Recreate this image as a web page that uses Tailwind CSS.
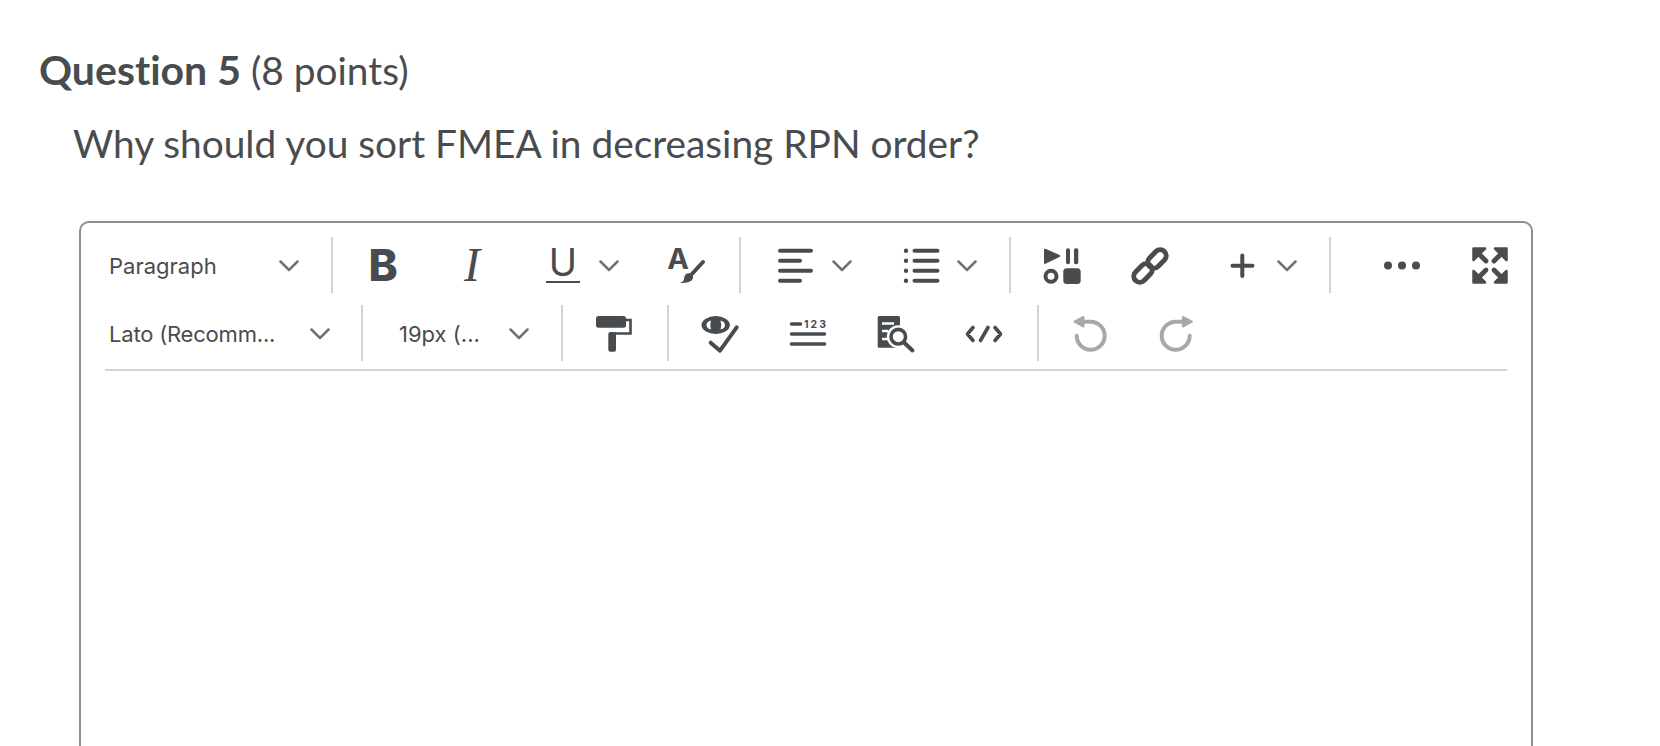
<!DOCTYPE html>
<html lang="en">
  <head>
    <meta charset="UTF-8" />
    <title>Question 5</title>
    <script src="https://cdn.jsdelivr.net/npm/@tailwindcss/browser@4"></script>
  </head>
  <body class="h-[746px] overflow-hidden bg-white text-[#494c4e] font-['Lato',sans-serif]">
    <div class="pt-[44px] pl-[39px] [font-variant-ligatures:none]">
      <h2 class="text-[38.85px] leading-[52px]"><strong class="font-bold text-[41px]">Question 5</strong> (8 points)</h2>
      <p class="mt-[21px] ml-[34px] text-[38.85px] leading-[52px]">Why should you sort FMEA in decreasing RPN order?</p>
    </div>

    <!-- Editor -->
    <div class="ml-[79px] mt-[52px] w-[1454px] h-[660px] border-2 border-[#8a8f94] rounded-[10px] px-[24px] pt-[14px] bg-white">
      <div class="border-b-2 border-[#cdd5dc] pb-[8px] w-[1402px]">
        <!-- Row 1 -->
        <div class="flex items-center h-[56px]">
          <div class="w-[174px] pl-1 mt-[2px] shrink-0 font-['Inter',sans-serif] text-[22px]">Paragraph</div>
          <div class="w-[20px] mt-[2px] shrink-0 flex justify-center">
            <svg width="20" height="12" viewBox="0 0 20 12" fill="none" stroke="#6e7376" stroke-width="2.5" stroke-linecap="round" stroke-linejoin="round"><path d="M1.5 1.5L10 10L18.5 1.5" /></svg>
          </div>
          <div class="w-[2px] h-[56px] bg-[#cdd5dc] ml-[32px] shrink-0"></div>
          <div class="w-[44px] ml-[28px] shrink-0 text-center font-['Inter',sans-serif] font-extrabold text-[44px] leading-[44px]">B</div>
          <div class="w-[44px] ml-[45px] shrink-0 text-center font-['Liberation_Serif',serif] italic text-[48px] leading-[44px]">I</div>
          <div class="w-[44px] ml-[47px] -mt-[2px] shrink-0 flex flex-col items-center">
            <span class="font-['Inter',sans-serif] font-normal text-[38px] leading-[32px]">U</span>
            <span class="block w-[34px] h-[2px] bg-[#494c4e] mt-[3px]"></span>
          </div>
          <div class="w-[20px] ml-[14px] mt-[2px] shrink-0 flex justify-center">
            <svg width="20" height="12" viewBox="0 0 20 12" fill="none" stroke="#6e7376" stroke-width="2.5" stroke-linecap="round" stroke-linejoin="round"><path d="M1.5 1.5L10 10L18.5 1.5" /></svg>
          </div>
          <div class="w-[44px] ml-[45px] shrink-0">
            <svg class="overflow-visible" width="44" height="44" viewBox="0 0 44 44" fill="#494c4e">
              <text x="14" y="26" text-anchor="middle" font-family="Inter" font-weight="700" font-size="29">A</text>
              <path d="M39 19L27 32" stroke="#494c4e" stroke-width="4" stroke-linecap="round" />
              <path d="M22 31c3-2 8 0 7 4c-1 4-6 5-13 5c2-1 4-2 4-4c0-2 1-4 2-5z" />
            </svg>
          </div>
          <div class="w-[2px] h-[56px] bg-[#cdd5dc] ml-[31px] shrink-0"></div>
          <div class="w-[44px] ml-[33px] shrink-0">
            <svg width="44" height="44" viewBox="0 0 44 44" fill="none" stroke="#494c4e" stroke-width="4" stroke-linecap="round">
              <path d="M6 7.7H37M6 17.7H26M6 27.7H37M6 37.7H26" />
            </svg>
          </div>
          <div class="w-[20px] ml-[14px] mt-[2px] shrink-0 flex justify-center">
            <svg width="20" height="12" viewBox="0 0 20 12" fill="none" stroke="#6e7376" stroke-width="2.5" stroke-linecap="round" stroke-linejoin="round"><path d="M1.5 1.5L10 10L18.5 1.5" /></svg>
          </div>
          <div class="w-[44px] ml-[48px] shrink-0">
            <svg width="44" height="44" viewBox="0 0 44 44" fill="#494c4e">
              <circle cx="6" cy="7.7" r="2.2" /><circle cx="6" cy="17.7" r="2.2" /><circle cx="6" cy="27.7" r="2.2" /><circle cx="6" cy="37.7" r="2.2" />
              <path d="M14.5 7.7H37.5M14.5 17.7H37.5M14.5 27.7H37.5M14.5 37.7H37.5" fill="none" stroke="#494c4e" stroke-width="4" stroke-linecap="round" />
            </svg>
          </div>
          <div class="w-[20px] ml-[13px] mt-[2px] shrink-0 flex justify-center">
            <svg width="20" height="12" viewBox="0 0 20 12" fill="none" stroke="#6e7376" stroke-width="2.5" stroke-linecap="round" stroke-linejoin="round"><path d="M1.5 1.5L10 10L18.5 1.5" /></svg>
          </div>
          <div class="w-[2px] h-[56px] bg-[#cdd5dc] ml-[32px] shrink-0"></div>
          <div class="w-[44px] ml-[29px] shrink-0">
            <svg width="44" height="44" viewBox="0 0 44 44" fill="#494c4e">
              <path d="M5.500 5.800L19.500 12Q21 13 19.500 14L5.500 20.800Q4 21.300 4 19.800V6.800Q4 5.300 5.500 5.800z" />
              <rect x="26" y="5.300" width="4" height="16" rx="1.800" /><rect x="34" y="5.300" width="4.300" height="16" rx="1.800" />
              <circle cx="11" cy="33.200" r="5.500" fill="none" stroke="#494c4e" stroke-width="4" />
              <rect x="23.300" y="25.300" width="17.400" height="15.700" rx="3.500" />
            </svg>
          </div>
          <div class="w-[44px] ml-[44px] shrink-0">
            <svg width="44" height="44" viewBox="0 0 44 44" fill="none" stroke="#494c4e" stroke-width="5">
              <rect x="-10.500" y="-6" width="21" height="12" rx="6" transform="translate(29 16) rotate(-45)" />
              <rect x="-10.500" y="-6" width="21" height="12" rx="6" transform="translate(15 30) rotate(-45)" />
            </svg>
          </div>
          <div class="w-[44px] ml-[48px] shrink-0">
            <svg width="44" height="44" viewBox="0 0 44 44" fill="none" stroke="#494c4e" stroke-width="4" stroke-linecap="round">
              <path d="M22.300 12.500V33M12.500 22.700H32.500" />
            </svg>
          </div>
          <div class="w-[20px] ml-[13px] mt-[2px] shrink-0 flex justify-center">
            <svg width="20" height="12" viewBox="0 0 20 12" fill="none" stroke="#6e7376" stroke-width="2.5" stroke-linecap="round" stroke-linejoin="round"><path d="M1.5 1.5L10 10L18.5 1.5" /></svg>
          </div>
          <div class="w-[2px] h-[56px] bg-[#cdd5dc] ml-[32px] shrink-0"></div>
          <div class="w-[44px] ml-[49px] shrink-0">
            <svg width="44" height="44" viewBox="0 0 44 44" fill="#494c4e">
              <circle cx="8" cy="22.600" r="4" /><circle cx="22" cy="22.600" r="4" /><circle cx="36" cy="22.600" r="4" />
            </svg>
          </div>
          <div class="w-[44px] ml-[44px] shrink-0">
            <svg width="44" height="44" viewBox="0 0 44 44" fill="#494c4e" stroke="#494c4e" stroke-linejoin="round" stroke-linecap="round">
              <path d="M5.500 5.500H17L5.500 17z" stroke-width="2.500" /><path d="M10 10L18 18" stroke-width="4.800" />
              <path d="M38.500 5.500H27L38.500 17z" stroke-width="2.500" /><path d="M34 10L26 18" stroke-width="4.800" />
              <path d="M5.500 39.500H17L5.500 28z" stroke-width="2.500" /><path d="M10 35L18 27" stroke-width="4.800" />
              <path d="M38.500 39.500H27L38.500 28z" stroke-width="2.500" /><path d="M34 35L26 27" stroke-width="4.800" />
            </svg>
          </div>
        </div>

        <!-- Row 2 -->
        <div class="flex items-center h-[56px] mt-[12px]">
          <div class="w-[205px] pl-1 mt-[2px] shrink-0 font-['Inter',sans-serif] text-[22px] tracking-[-0.2px]">Lato (Recomm...</div>
          <div class="w-[20px] mt-[2px] shrink-0 flex justify-center">
            <svg width="20" height="12" viewBox="0 0 20 12" fill="none" stroke="#6e7376" stroke-width="2.5" stroke-linecap="round" stroke-linejoin="round"><path d="M1.5 1.5L10 10L18.5 1.5" /></svg>
          </div>
          <div class="w-[2px] h-[56px] bg-[#cdd5dc] ml-[31px] shrink-0"></div>
          <div class="w-[146px] pl-[36px] mt-[2px] shrink-0 font-['Inter',sans-serif] text-[22px]">19px (...</div>
          <div class="w-[20px] mt-[2px] shrink-0 flex justify-center">
            <svg width="20" height="12" viewBox="0 0 20 12" fill="none" stroke="#6e7376" stroke-width="2.5" stroke-linecap="round" stroke-linejoin="round"><path d="M1.5 1.5L10 10L18.5 1.5" /></svg>
          </div>
          <div class="w-[2px] h-[56px] bg-[#cdd5dc] ml-[32px] shrink-0"></div>
          <div class="w-[44px] ml-[28px] shrink-0">
            <svg width="44" height="44" viewBox="0 0 44 44" fill="#494c4e">
              <rect x="5" y="5" width="30" height="11.700" rx="2.500" />
              <path d="M35 9H39.500V22.500H21" fill="none" stroke="#494c4e" stroke-width="2.600" />
              <rect x="17.300" y="21" width="7.700" height="19.700" rx="2" />
            </svg>
          </div>
          <div class="w-[2px] h-[56px] bg-[#cdd5dc] ml-[32px] shrink-0"></div>
          <div class="w-[44px] ml-[29px] shrink-0">
            <svg width="44" height="44" viewBox="0 0 44 44" fill="#494c4e">
              <ellipse cx="17.700" cy="14" rx="14.200" ry="9" />
              <path d="M8.500 14q0-3.500 4.500-4.500q-1.500 4.500 0 9q-4.500-1-4.500-4.500zM27 14q0-3.500-4.500-4.500q1.500 4.500 0 9q4.500-1 4.500-4.500z" fill="#fff" />
              <path d="M12.700 31.700L22 39.700L38.700 16.300" fill="none" stroke="#494c4e" stroke-width="4" stroke-linecap="round" stroke-linejoin="round" />
            </svg>
          </div>
          <div class="w-[44px] ml-[44px] shrink-0">
            <svg class="overflow-visible" width="44" height="44" viewBox="0 0 44 44" fill="#494c4e">
              <path d="M5.500 13H14.500M5.500 23H38.500M5.500 33H38.500" fill="none" stroke="#494c4e" stroke-width="3.600" stroke-linecap="round" />
              <text x="18" y="17" font-family="Inter" font-weight="700" font-size="10.500" letter-spacing="2">123</text>
            </svg>
          </div>
          <div class="w-[44px] ml-[44px] shrink-0">
            <svg width="44" height="44" viewBox="0 0 44 44" fill="#494c4e">
              <rect x="3.700" y="5" width="22.300" height="31.700" rx="1.500" />
              <path d="M8 12.500H20M8 20H14M8 28H14" fill="none" stroke="#fff" stroke-width="2.600" />
              <circle cx="24.300" cy="25.700" r="11.500" fill="#fff" />
              <circle cx="24.300" cy="25.700" r="7.300" fill="none" stroke="#494c4e" stroke-width="3.600" />
              <path d="M30 31.500L38.500 39.500" stroke="#494c4e" stroke-width="4" stroke-linecap="round" />
            </svg>
          </div>
          <div class="w-[44px] ml-[44px] shrink-0">
            <svg width="44" height="44" viewBox="0 0 44 44" fill="none" stroke="#494c4e" stroke-width="3.600" stroke-linecap="round" stroke-linejoin="round">
              <path d="M11 16.500L5.500 23L11 29.500M26 16.500L18.500 29.500M33 16.500L38.500 23L33 29.500" />
            </svg>
          </div>
          <div class="w-[2px] h-[56px] bg-[#cdd5dc] ml-[31px] shrink-0"></div>
          <div class="w-[44px] ml-[30px] shrink-0">
            <svg width="44" height="44" viewBox="0 0 44 44" fill="none" stroke="#a6a9ab" stroke-width="4">
              <path d="M15 10.700H21.700A14 14 0 1 1 7.700 24.700" stroke-linecap="round" />
              <path d="M5.500 10.700L14.500 6V15.500z" fill="#a6a9ab" stroke-width="2" stroke-linejoin="round" />
            </svg>
          </div>
          <div class="w-[44px] ml-[41px] shrink-0">
            <svg width="44" height="44" viewBox="0 0 44 44" fill="none" stroke="#a6a9ab" stroke-width="4">
              <path d="M28.400 10.700H21.700A14 14 0 1 0 35.700 24.700" stroke-linecap="round" />
              <path d="M37.900 10.700L28.900 6V15.500z" fill="#a6a9ab" stroke-width="2" stroke-linejoin="round" />
            </svg>
          </div>
        </div>
      </div>
    </div>
  </body>
</html>
